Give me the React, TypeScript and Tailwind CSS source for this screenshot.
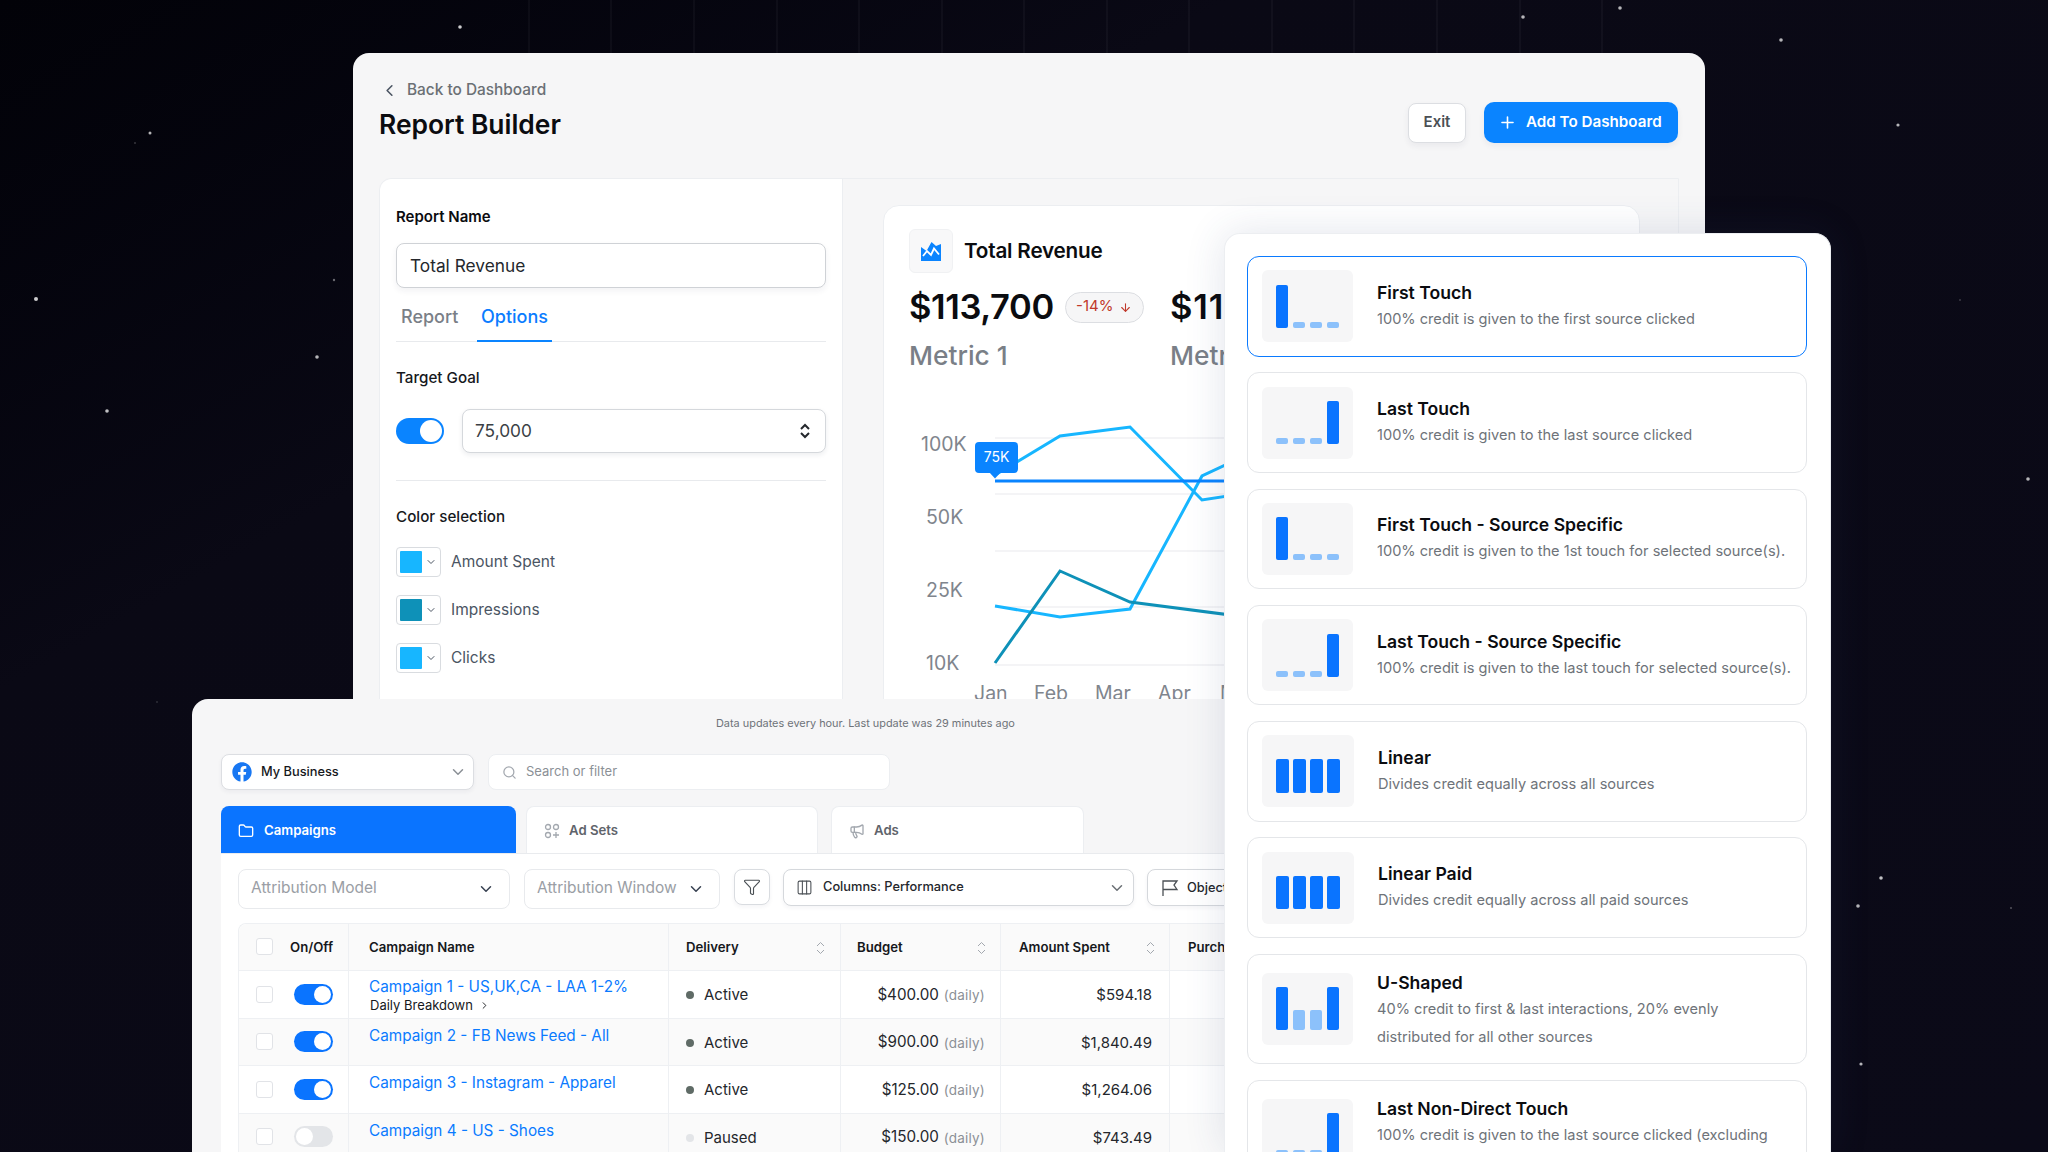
import React from 'react';
import { ChevronLeft, ChevronDown, ChevronRight, Plus, Search, Folder, Funnel, Columns3, Megaphone, ArrowDown } from 'lucide-react';
import { FaFacebook } from 'react-icons/fa';

const stars: [number, number, number, number][] = [
  [460, 27, 1.8, 0.8], [150, 133, 1.5, 0.7], [135, 143, 1, 0.2], [36, 299, 2, 0.8], [107, 411, 1.8, 0.75], [317, 357, 1.8, 0.7], [334, 280, 1.2, 0.4],
  [157, 702, 1, 0.15], [1523, 17, 1.8, 0.7], [1620, 8, 1.8, 0.7], [1781, 40, 1.8, 0.7], [1898, 125, 1.6, 0.7], [2028, 479, 1.8, 0.7],
  [1881, 878, 1.8, 0.75], [1858, 906, 1.8, 0.7], [1861, 1064, 1.6, 0.7], [2011, 908, 1, 0.3], [1960, 300, 1, 0.2],
];
const gridX = [529, 611, 694, 777, 859, 942, 1024, 1107, 1189, 1272, 1354, 1437, 1520, 1602];

function Background() {
  return (
    <svg className="absolute inset-0" width="2048" height="1152" viewBox="0 0 2048 1152">
      {gridX.map((x) => (
        <line key={x} x1={x} y1={0} x2={x} y2={53} stroke="#ffffff" strokeOpacity={0.07} strokeWidth={1} />
      ))}
      {stars.map(([x, y, r, o], i) => (
        <circle key={i} cx={x} cy={y} r={r} fill="#ffffff" fillOpacity={o} />
      ))}
    </svg>
  );
}

function Toggle({ on = true, big = false }: { on?: boolean; big?: boolean }) {
  if (big) {
    return (
      <div className="flex h-[26px] w-[48px] shrink-0 items-center justify-end rounded-full bg-[#0a84ff] pr-[2px]">
        <div className="h-[22px] w-[22px] rounded-full bg-white" />
      </div>
    );
  }
  return on ? (
    <div className="flex h-[21px] w-[39px] shrink-0 items-center justify-end rounded-full bg-[#0a74ff] pr-[2px]">
      <div className="h-[17px] w-[17px] rounded-full bg-white" />
    </div>
  ) : (
    <div className="flex h-[21px] w-[39px] shrink-0 items-center rounded-full bg-[#e3e5e8] pl-[2px]">
      <div className="h-[17px] w-[17px] rounded-full bg-white" />
    </div>
  );
}

function Swatch({ color, label }: { color: string; label: string }) {
  return (
    <div className="flex items-center gap-[10px]">
      <div className="flex h-[30px] w-[45px] items-center gap-[3px] rounded-[4px] border border-[#d9dce0] bg-white pl-[3px]">
        <div className="h-[22px] w-[22px] rounded-[1px]" style={{ backgroundColor: color }} />
        <ChevronDown size={12} className="text-[#4b5563]" />
      </div>
      <span className="text-[15.500px] text-[#4b5563]">{label}</span>
    </div>
  );
}

function Metric({ value, label, wide = false }: { value: string; label: string; wide?: boolean }) {
  return (
    <div className="flex w-[261px] shrink-0 flex-col">
      <div className="flex h-[44px] items-center gap-[11px]">
        <span className={`text-[34.500px] font-semibold text-[#0b0c10] ${wide ? 'tracking-[0.8px]' : 'tracking-[-0.4px]'}`}>{value}</span>
        <div className="flex h-[31px] w-[79px] items-center justify-center gap-[6px] rounded-full border border-[#dcdee2] bg-[#f6f6f7]">
          <span className="-mt-px text-[15px] text-[#c0392b]">-14%</span>
          <ArrowDown size={13} className="text-[#c0392b]" />
        </div>
      </div>
      <div className="mt-[9px] text-[26.300px] leading-[36px] font-medium text-[#7a7f87]">{label}</div>
    </div>
  );
}

function Chart() {
  const label = 'fill-[#80858d] text-[19.500px]';
  return (
    <svg className="-ml-[25px] mt-[26px] shrink-0" width="755" height="320" viewBox="884 400 755 320">
      {[438, 494, 551, 607, 665].map((y) => (
        <line key={y} x1={995} x2={1639} y1={y} y2={y} stroke="#f0f1f3" strokeWidth={1.5} />
      ))}
      <text x={921} y={451} className={label}>100K</text>
      <text x={926} y={524} className={label}>50K</text>
      <text x={926} y={597} className={label}>25K</text>
      <text x={926} y={670} className={label}>10K</text>
      <text x={974} y={700} className={label}>Jan</text>
      <text x={1034} y={700} className={label}>Feb</text>
      <text x={1095} y={700} className={label}>Mar</text>
      <text x={1158} y={700} className={label}>Apr</text>
      <text x={1220} y={700} className={label}>May</text>
      <polyline points="995,475 1060,436 1130,427 1202,500 1300,485" fill="none" stroke="#17b6ff" strokeWidth={3} />
      <polyline points="995,606 1060,617 1130,609 1202,476 1300,430" fill="none" stroke="#17b6ff" strokeWidth={3} />
      <polyline points="995,663 1060,571 1130,602 1300,624" fill="none" stroke="#0e91b8" strokeWidth={3} />
      <line x1={995} x2={1639} y1={481} y2={481} stroke="#0a84ff" strokeWidth={3} />
      <rect x={975} y={442} width={43} height={31} rx={4} fill="#0a84ff" />
      <path d="M989 472h12l-6 6.500z" fill="#0a84ff" />
      <text x={996.500} y={462} textAnchor="middle" className="fill-white text-[14px]">75K</text>
    </svg>
  );
}

function TopWindow() {
  return (
    <div className="absolute left-[353px] top-[53px] h-[1099px] w-[1352px] overflow-hidden rounded-t-[16px] bg-[#f6f6f7]">
      <div className="flex items-start justify-between pl-[26px] pr-[27px] pt-[25px]">
        <div className="flex flex-col">
          <div className="flex h-[24px] items-center gap-[8px] pl-[1px]">
            <ChevronLeft size={19} strokeWidth={2} className="text-[#4b5563]" />
            <span className="text-[15.400px] font-medium text-[#6b7075]">Back to Dashboard</span>
          </div>
          <div className="text-[26.400px] leading-[44px] font-semibold text-[#0b0c10]">Report Builder</div>
        </div>
        <div className="mt-[24px] flex items-center gap-[18px]">
          <div className="flex h-[40px] w-[58px] items-center justify-center rounded-[8px] border border-[#dcdee2] bg-white text-[15px] font-semibold text-[#4b5055] shadow-[0_3px_6px_rgba(30,40,70,0.06)]">Exit</div>
          <div className="flex h-[41px] w-[194px] items-center gap-[9px] rounded-[10px] bg-[#0a84ff] pl-[14px] text-[15.200px] font-semibold text-white shadow-[0_3px_6px_rgba(30,40,70,0.06)]">
            <Plus size={19} strokeWidth={2} />
            <span>Add To Dashboard</span>
          </div>
        </div>
      </div>
      <div className="ml-[26px] mt-[32px] flex h-[1000px] w-[1300px] rounded-tl-[12px] border border-[#eceef1] bg-[#f6f6f7]">
        <div className="flex w-[463px] shrink-0 flex-col rounded-tl-[12px] border-r border-[#eceef1] bg-white px-[16px] pt-[27px]">
          <div className="text-[15px] leading-[22px] font-semibold text-[#0b0c10]">Report Name</div>
          <div className="mt-[15px] flex h-[45px] w-[430px] items-center rounded-[8px] border border-[#cfd2d6] bg-white pl-[13px] text-[17.300px] text-[#24272c] shadow-[0_3px_6px_rgba(30,40,70,0.06)]">Total Revenue</div>
          <div className="mt-[8px] flex h-[46px] w-[430px] gap-[20px] border-b border-[#e8eaed] pl-[5px]">
            <div className="w-[56px] text-[18px] leading-[41px] font-medium text-[#7a7f87]">Report</div>
            <div className="w-[75px] border-b-2 border-[#0a84ff] text-center text-[18px] leading-[41px] font-medium text-[#0a7cff] -mb-px">Options</div>
          </div>
          <div className="mt-[25px] text-[15.200px] leading-[22px] font-medium text-[#16181c]">Target Goal</div>
          <div className="mt-[20px] flex w-[430px] items-center gap-[18px]">
            <Toggle big />
            <div className="flex h-[44px] flex-1 items-center justify-between rounded-[8px] border border-[#d5d8dc] bg-white pl-[12px] pr-[14px] text-[17.300px] text-[#3b3f45] shadow-[0_2px_5px_rgba(30,40,70,0.08)]">
              <span>75,000</span>
              <svg width="12" height="16" viewBox="0 0 12 16" fill="none" stroke="#24272c" strokeWidth="2">
                <path d="M2 6l4-4 4 4M2 10l4 4 4-4" />
              </svg>
            </div>
          </div>
          <div className="mt-[27px] h-px w-[430px] bg-[#e8eaed]" />
          <div className="mt-[25px] text-[15.200px] leading-[22px] font-medium text-[#16181c]">Color selection</div>
          <div className="mt-[19px] flex flex-col gap-[18px]">
            <Swatch color="#17b6ff" label="Amount Spent" />
            <Swatch color="#0e91b8" label="Impressions" />
            <Swatch color="#17b6ff" label="Clicks" />
          </div>
        </div>
        <div className="flex-1 pl-[40px] pt-[26px]">
          <div className="flex h-[900px] w-[757px] flex-col rounded-t-[16px] border border-[#eceef1] bg-white pl-[25px] pt-[23px]">
            <div className="flex items-center gap-[11px]">
              <div className="flex h-[44px] w-[44px] items-center justify-center rounded-[6px] border border-[#f0f1f3] bg-[#f8f8f9]">
                <svg width="20" height="19" viewBox="0 0 20 19">
                  <path d="M0 5l5.500 4L10.500 0 15 4l5-2v17H0z" fill="#0a84ff" />
                  <path d="M2 14l4-5 4 4 3-6.500 5 6" fill="none" stroke="#ffffff" strokeWidth="1.800" />
                </svg>
              </div>
              <span className="text-[20.700px] font-semibold tracking-[-0.2px] text-[#0b0c10]">Total Revenue</span>
            </div>
            <div className="mt-[12px] flex">
              <Metric value="$113,700" label="Metric 1" />
              <Metric value="$113,700" label="Metric 2" wide />
            </div>
            <Chart />
          </div>
        </div>
      </div>
    </div>
  );
}

function SortIcon() {
  return (
    <svg width="9" height="14" viewBox="0 0 9 14" fill="none" stroke="#a3a8af" strokeWidth="1">
      <path d="M1 5l3.500-3.500L8 5M1 9l3.500 3.500L8 9" />
    </svg>
  );
}

const rows = [
  { name: 'Campaign 1 - US,UK,CA - LAA 1-2%', sub: true, on: true, status: 'Active', budget: '$400.00', amount: '$594.18', bg: 'bg-white' },
  { name: 'Campaign 2 - FB News Feed - All', sub: false, on: true, status: 'Active', budget: '$900.00', amount: '$1,840.49', bg: 'bg-[#fafafa]' },
  { name: 'Campaign 3 - Instagram - Apparel', sub: false, on: true, status: 'Active', budget: '$125.00', amount: '$1,264.06', bg: 'bg-white' },
  { name: 'Campaign 4 - US - Shoes', sub: false, on: false, status: 'Paused', budget: '$150.00', amount: '$743.49', bg: 'bg-[#fafafa]' },
];

function Table() {
  const rowGrid = 'grid h-[47.500px] grid-cols-[110px_320px_172px_160px_169px_200px] border-b border-[#eef0f3]';
  const cell = 'flex items-center border-r border-[#eef0f3]';
  const head = 'pt-[2px] text-[13.200px] font-semibold text-[#16181c]';
  const check = 'h-[17px] w-[17px] shrink-0 rounded-[3px] border border-[#e1e3e7] bg-white';
  return (
    <div className="mt-[14px] w-[1000px] rounded-tl-[8px] border-l border-t border-[#eef0f3]">
      <div className={`${rowGrid} rounded-tl-[8px] bg-[#fafafa]`}>
        <div className={`${cell} gap-[17px] pl-[17px]`}>
          <div className={check} />
          <span className={head}>On/Off</span>
        </div>
        <div className={`${cell} pl-[20px] ${head}`}>Campaign Name</div>
        <div className={`${cell} justify-between pl-[17px] pr-[15px] ${head}`}>
          <span>Delivery</span>
          <SortIcon />
        </div>
        <div className={`${cell} justify-between pl-[16px] pr-[14px] ${head}`}>
          <span>Budget</span>
          <SortIcon />
        </div>
        <div className={`${cell} justify-between pl-[18px] pr-[14px] ${head}`}>
          <span>Amount Spent</span>
          <SortIcon />
        </div>
        <div className={`${cell} pl-[18px] ${head}`}>Purchases</div>
      </div>
      {rows.map((r) => (
        <div key={r.name} className={`${rowGrid} ${r.bg}`}>
          <div className={`${cell} gap-[21px] pl-[17px]`}>
            <div className={check} />
            <Toggle on={r.on} />
          </div>
          <div className={`flex flex-col border-r border-[#eef0f3] pl-[20px] ${r.sub ? 'pt-[6px]' : 'pt-[7px]'}`}>
            <span className="text-[15.300px] leading-[20px] text-[#0a7aff]">{r.name}</span>
            {r.sub && (
              <span className="flex items-center gap-[6px] pl-px text-[13px] leading-[17px] text-[#16181c]">
                Daily Breakdown
                <ChevronRight size={11} />
              </span>
            )}
          </div>
          <div className={`${cell} gap-[10px] pl-[17px] pt-[2px]`}>
            <div className={`h-[8px] w-[8px] rounded-full ${r.on ? 'bg-[#5f6b66]' : 'bg-[#e3e5e8]'}`} />
            <span className="text-[15px] text-[#24272c]">{r.status}</span>
          </div>
          <div className={`${cell} justify-end gap-[5px] pr-[15px] pt-[2px]`}>
            <span className="text-[15.200px] text-[#24272c]">{r.budget}</span>
            <span className="text-[13.500px] tracking-[0.2px] text-[#8b9096]">(daily)</span>
          </div>
          <div className={`${cell} justify-end pr-[17px] pt-[2px] text-[15px] text-[#24272c]`}>{r.amount}</div>
          <div className={cell} />
        </div>
      ))}
    </div>
  );
}

function Dropdown({ label, w }: { label: string; w: string }) {
  return (
    <div className={`flex h-[39.500px] ${w} shrink-0 items-center justify-between rounded-[8px] border border-[#e8eaed] bg-white pl-[12px] pr-[14px] text-[15.500px] text-[#9a9ea5]`}>
      <span className="-mt-[2px]">{label}</span>
      <ChevronDown size={18} className="text-[#374151]" />
    </div>
  );
}

function BottomWindow() {
  return (
    <div className="absolute left-[192px] top-[699px] h-[453px] w-[1200px] overflow-hidden rounded-tl-[16px] bg-[#f6f6f7]">
      <div className="ml-[524px] pt-[16px] text-[10.900px] leading-[16px] whitespace-nowrap text-[#6e7379]">Data updates every hour. Last update was 29 minutes ago</div>
      <div className="ml-[29px] mt-[23px] flex gap-[14px]">
        <div className="flex h-[36px] w-[253px] items-center rounded-[8px] border border-[#dcdee2] bg-white pl-[10px] pr-[6px] shadow-[0_2px_4px_rgba(30,40,70,0.05)]">
          <FaFacebook size={20} className="text-[#1877f2]" />
          <span className="ml-[9px] flex-1 text-[12.800px] font-medium text-[#16181c]">My Business</span>
          <ChevronDown size={18} className="text-[#8b9096]" />
        </div>
        <div className="flex h-[36px] w-[402px] items-center rounded-[8px] border border-[#eceef1] bg-white pl-[13px]">
          <Search size={15} className="text-[#a3a8af]" />
          <span className="ml-[9px] text-[13px] text-[#8b9096]">Search or filter</span>
        </div>
      </div>
      <div className="ml-[29px] mt-[16px] flex">
        <div className="flex h-[47px] w-[295px] items-center gap-[10px] rounded-t-[8px] bg-[#0a74ff] pl-[17px] pt-[2px] text-[13.200px] font-semibold text-white">
          <Folder size={16} />
          <span>Campaigns</span>
        </div>
        <div className="ml-[10px] flex h-[47px] w-[292px] items-center gap-[9px] rounded-t-[8px] border border-b-0 border-[#eceef1] bg-white pl-[17px] pt-[2px] text-[13.200px] font-semibold text-[#5f646b]">
          <svg width="16" height="16" viewBox="0 0 16 16" fill="none" stroke="#a3a8af" strokeWidth="1.300">
            <circle cx="4" cy="4" r="2.500" />
            <circle cx="12" cy="4" r="2.500" />
            <circle cx="4" cy="12" r="2.500" />
            <path d="M12 9v6M9 12h6" />
          </svg>
          <span>Ad Sets</span>
        </div>
        <div className="ml-[13px] flex h-[47px] w-[253px] items-center gap-[9px] rounded-t-[8px] border border-b-0 border-[#eceef1] bg-white pl-[17px] pt-[2px] text-[13.200px] font-semibold text-[#5f646b]">
          <Megaphone size={16} className="text-[#a3a8af]" />
          <span>Ads</span>
        </div>
      </div>
      <div className="ml-[29px] h-[300px] border-t border-[#e9ebee] bg-white pl-[17px] pt-[15px]">
        <div className="flex items-start">
          <Dropdown label="Attribution Model" w="w-[272px]" />
          <div className="ml-[14px] shrink-0">
            <Dropdown label="Attribution Window" w="w-[196px]" />
          </div>
          <div className="ml-[14px] flex h-[36px] w-[36px] shrink-0 items-center justify-center rounded-[8px] border border-[#d9dce0] bg-white shadow-[0_2px_4px_rgba(30,40,70,0.05)]">
            <Funnel size={18} strokeWidth={1.500} className="text-[#4b5055]" />
          </div>
          <div className="ml-[13px] flex h-[37px] w-[351px] shrink-0 items-center rounded-[8px] border border-[#d5d8dc] bg-white pl-[12px] pr-[7px] shadow-[0_2px_4px_rgba(30,40,70,0.05)]">
            <Columns3 size={17} strokeWidth={1.500} className="text-[#4b5055]" />
            <span className="ml-[10px] -mt-px flex-1 text-[12.800px] font-medium text-[#24272c]">Columns: Performance</span>
            <ChevronDown size={18} className="text-[#6b7075]" />
          </div>
          <div className="ml-[13px] flex h-[37px] w-[200px] shrink-0 items-center rounded-[8px] border border-[#d5d8dc] bg-white pl-[13px] shadow-[0_2px_4px_rgba(30,40,70,0.05)]">
            <svg width="18" height="18" viewBox="0 0 18 18" fill="none" stroke="#4b5055" strokeWidth="1.300">
              <path d="M2 17V2h14l-3 4 3 4.500H2" />
            </svg>
            <span className="ml-[8px] text-[12.800px] font-medium text-[#24272c]">Objective</span>
          </div>
        </div>
        <Table />
      </div>
    </div>
  );
}

function Bars({ kind }: { kind: string }) {
  const dark = 'rounded-[2px] bg-[#0a74ff]';
  const light = 'rounded-[2px] bg-[#8cc1fb]';
  if (kind === 'linear') {
    return (
      <div className="flex items-end gap-[4.500px]">
        {[0, 1, 2, 3].map((i) => (
          <div key={i} className={`h-[33.500px] w-[12.500px] ${dark}`} />
        ))}
      </div>
    );
  }
  const heights: Record<string, [string, string][]> = {
    first: [[dark, 'h-[43px]'], [light, 'h-[6px]'], [light, 'h-[6px]'], [light, 'h-[6px]']],
    last: [[light, 'h-[6px]'], [light, 'h-[6px]'], [light, 'h-[6px]'], [dark, 'h-[43px]']],
    u: [[dark, 'h-[43px]'], [light, 'h-[20px]'], [light, 'h-[20px]'], [dark, 'h-[43px]']],
  };
  return (
    <div className="flex items-end gap-[5px]">
      {heights[kind].map(([c, h], i) => (
        <div key={i} className={`w-[12px] ${c} ${h}`} />
      ))}
    </div>
  );
}

const models = [
  { title: 'First Touch', desc: '100% credit is given to the first source clicked', kind: 'first', active: true },
  { title: 'Last Touch', desc: '100% credit is given to the last source clicked', kind: 'last' },
  { title: 'First Touch - Source Specific', desc: '100% credit is given to the 1st touch for selected source(s).', kind: 'first' },
  { title: 'Last Touch - Source Specific', desc: '100% credit is given to the last touch for selected source(s).', kind: 'last' },
  { title: 'Linear', desc: 'Divides credit equally across all sources', kind: 'linear' },
  { title: 'Linear Paid', desc: 'Divides credit equally across all paid sources', kind: 'linear' },
  { title: 'U-Shaped', desc: '40% credit to first & last interactions, 20% evenly distributed for all other sources', kind: 'u', tall: true },
  { title: 'Last Non-Direct Touch', desc: '100% credit is given to the last source clicked (excluding direct traffic)', kind: 'last', tall: true },
];

function ModelPanel() {
  return (
    <div className="absolute left-[1224px] top-[233px] flex h-[919px] w-[607px] flex-col gap-[15.800px] overflow-hidden rounded-t-[16px] border border-b-0 border-[#eceef1] bg-white pl-[22px] pr-[23px] pt-[22px] shadow-[0_0_40px_rgba(50,70,120,0.14)]">
      {models.map((m) => (
        <div
          key={m.title}
          className={`flex shrink-0 items-center gap-[24px] rounded-[12px] bg-white pl-[13.500px] pr-[8px] ${m.tall ? 'h-[110px]' : 'h-[100.500px]'} ${m.active ? 'border-[1.500px] border-[#0a7aff]' : 'border border-[#e4e6e9]'}`}
        >
          <div className={`flex h-[72px] shrink-0 items-end rounded-[6px] bg-[#f6f6f7] pb-[14.500px] pl-[14.500px] ${m.kind === 'linear' ? 'w-[92.500px]' : 'w-[91.500px]'}`}>
            <Bars kind={m.kind} />
          </div>
          <div className={`flex flex-col ${m.tall ? 'max-w-[416px] pt-[5px]' : 'pt-[1px]'}`}>
            <div className="text-[17.600px] leading-[24px] font-semibold text-[#0b0c10]">{m.title}</div>
            <div className="text-[14.600px] leading-[28px] text-[#6e7379]">{m.desc}</div>
          </div>
        </div>
      ))}
    </div>
  );
}

export default function App() {
  return (
    <div className="relative h-[1152px] w-[2048px] overflow-hidden bg-linear-to-br from-[#020208] via-[#0a0915] via-30% to-[#0b0a18] font-[family-name:Inter,sans-serif]">
      <Background />
      <TopWindow />
      <BottomWindow />
      <ModelPanel />
    </div>
  );
}
